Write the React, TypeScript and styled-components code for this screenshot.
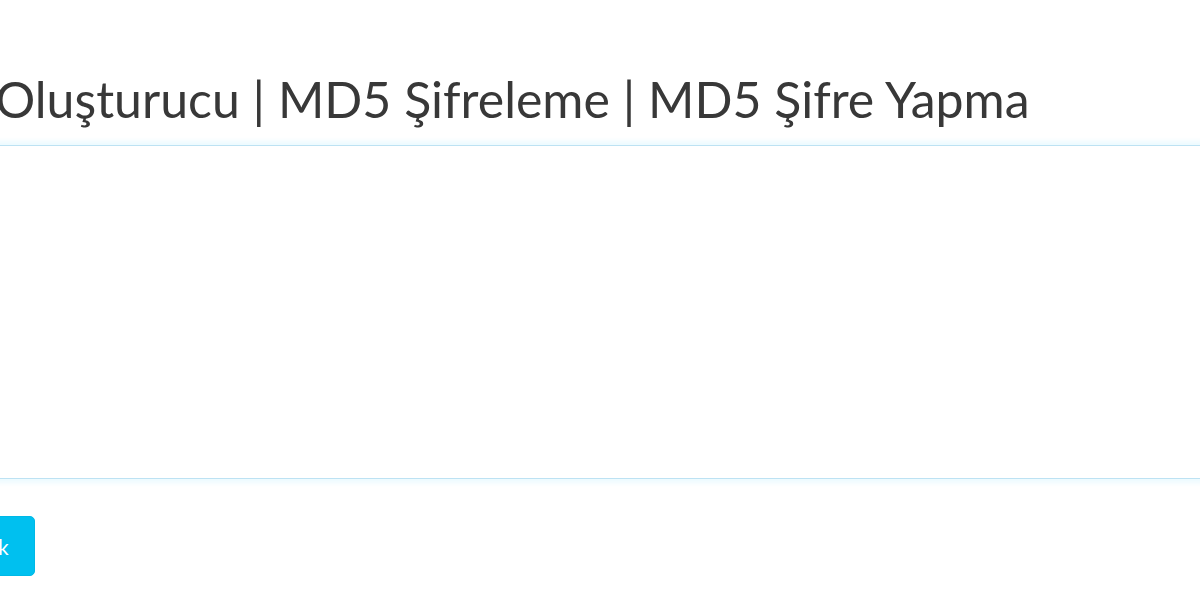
import styled, { createGlobalStyle } from "styled-components";

const GlobalStyle = createGlobalStyle`
  html, body {
    margin: 0;
    padding: 0;
    background: #ffffff;
    overflow: hidden;
  }
  body {
    font-family: "Lato", "Open Sans", sans-serif;
    color: #333333;
  }
`;

// the screenshot is a crop of a wider page, so the content starts left of the viewport
const Page = styled.div`
  width: 1600px;
  margin-left: -131px;
  padding-top: 63px;
  display: flex;
  flex-direction: column;
`;

const Title = styled.h1`
  margin: 0;
  font-family: "Lato", "Open Sans", sans-serif;
  font-weight: 400;
  font-size: 50px;
  line-height: 72px;
  color: #383838;
  white-space: nowrap;
`;

const TextArea = styled.textarea`
  display: block;
  box-sizing: border-box;
  margin-top: 10px;
  height: 334px;
  padding: 12px 18px;
  border: 1px solid #bde2f3;
  border-radius: 0;
  box-shadow: 0 0 5px 4px rgba(200, 240, 255, 0.35);
  resize: none;
  outline: none;
  font-family: "Lato", sans-serif;
  font-size: 20px;
`;

const Actions = styled.div`
  display: flex;
  margin-top: 37px;
`;

const Button = styled.button`
  box-sizing: border-box;
  height: 60px;
  padding: 0 25px 0 31px;
  border: 1px solid #00b8e6;
  border-radius: 5px;
  background: #00c0ef;
  color: #ffffff;
  font-family: "Lato", sans-serif;
  font-size: 21px;
  font-weight: 400;
  cursor: pointer;
`;

export default function App() {
  return (
    <>
      <GlobalStyle />
      <Page>
        <Title>MD5 Oluşturucu | MD5 Şifreleme | MD5 Şifre Yapma</Title>
        <TextArea />
        <Actions>
          <Button>Oluşturmak</Button>
        </Actions>
      </Page>
    </>
  );
}
